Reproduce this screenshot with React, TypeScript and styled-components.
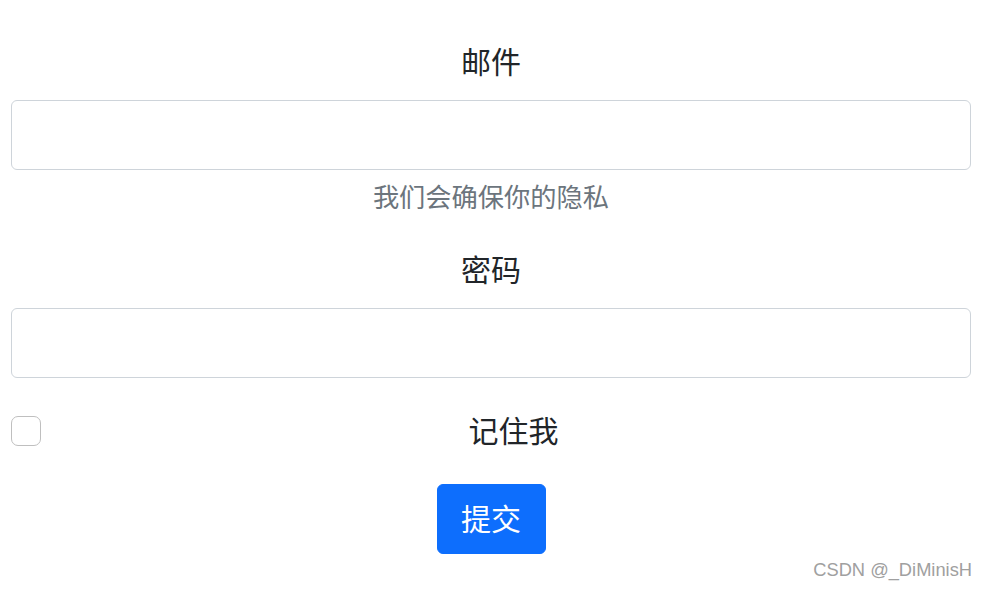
import React from "react";
import styled, { createGlobalStyle } from "styled-components";

const GlobalStyle = createGlobalStyle`
  html, body { margin: 0; padding: 0; background: #fff; }
  body {
    font-family: "Liberation Sans", "Noto Sans CJK SC", sans-serif;
    font-size: 30px;
    line-height: 1.5;
    color: #212529;
  }
  * { box-sizing: border-box; }
`;

const Page = styled.div`
  position: relative;
  width: 987px;
  height: 589px;
  overflow: hidden;
`;

const Form = styled.form`
  width: 960px;
  margin-left: 11px;
  padding-top: 40px;
  text-align: center;
  display: flex;
  flex-direction: column;
`;

const Group = styled.div`
  margin-bottom: 30px;
`;

const Label = styled.label`
  display: block;
  margin-bottom: 15px;
  font-size: 30px;
  line-height: 45px;
  color: #212529;
`;

const Input = styled.input`
  display: block;
  width: 100%;
  height: 70px;
  padding: 11px 22px;
  font-size: 30px;
  border: 1px solid #ced4da;
  border-radius: 6px;
  background: #fff;
  outline: none;
`;

const Help = styled.div`
  margin-top: 8px;
  font-size: 26.25px;
  line-height: 40px;
  color: #6c757d;
`;

const CheckRow = styled.div`
  display: flex;
  align-items: center;
  margin-bottom: 30px;
  height: 45px;
`;

const CheckBox = styled.input`
  appearance: none;
  width: 30px;
  height: 30px;
  margin: 1px 15px 0 0;
  border: 1px solid #bfbfbf;
  border-radius: 7px;
  background: #fff;
  flex: none;
`;

const CheckLabel = styled.label`
  flex: 1;
  text-align: center;
  font-size: 30px;
  line-height: 45px;
  color: #212529;
  padding-top: 2px;
`;

const Submit = styled.button`
  align-self: center;
  margin-top: 1px;
  height: 70px;
  padding: 0 23.5px;
  font-family: inherit;
  font-size: 30px;
  line-height: 45px;
  color: #fff;
  background: #0d6efd;
  border: 1px solid #0d6efd;
  border-radius: 6px;
`;

const Watermark = styled.div`
  position: absolute;
  right: 15px;
  bottom: 9px;
  font-family: "Liberation Sans", Arial, sans-serif;
  font-size: 18.3px;
  color: #a0a0a0;
  line-height: 20px;
`;

export default function App() {
  return (
    <>
      <GlobalStyle />
      <Page>
        <Form onSubmit={(e) => e.preventDefault()}>
          <Group>
            <Label htmlFor="email">邮件</Label>
            <Input id="email" type="email" />
            <Help>我们会确保你的隐私</Help>
          </Group>
          <Group>
            <Label htmlFor="pwd">密码</Label>
            <Input id="pwd" type="password" />
          </Group>
          <CheckRow>
            <CheckBox type="checkbox" id="remember" />
            <CheckLabel htmlFor="remember">记住我</CheckLabel>
          </CheckRow>
          <Submit type="submit">提交</Submit>
        </Form>
        <Watermark>CSDN @_DiMinisH</Watermark>
      </Page>
    </>
  );
}
